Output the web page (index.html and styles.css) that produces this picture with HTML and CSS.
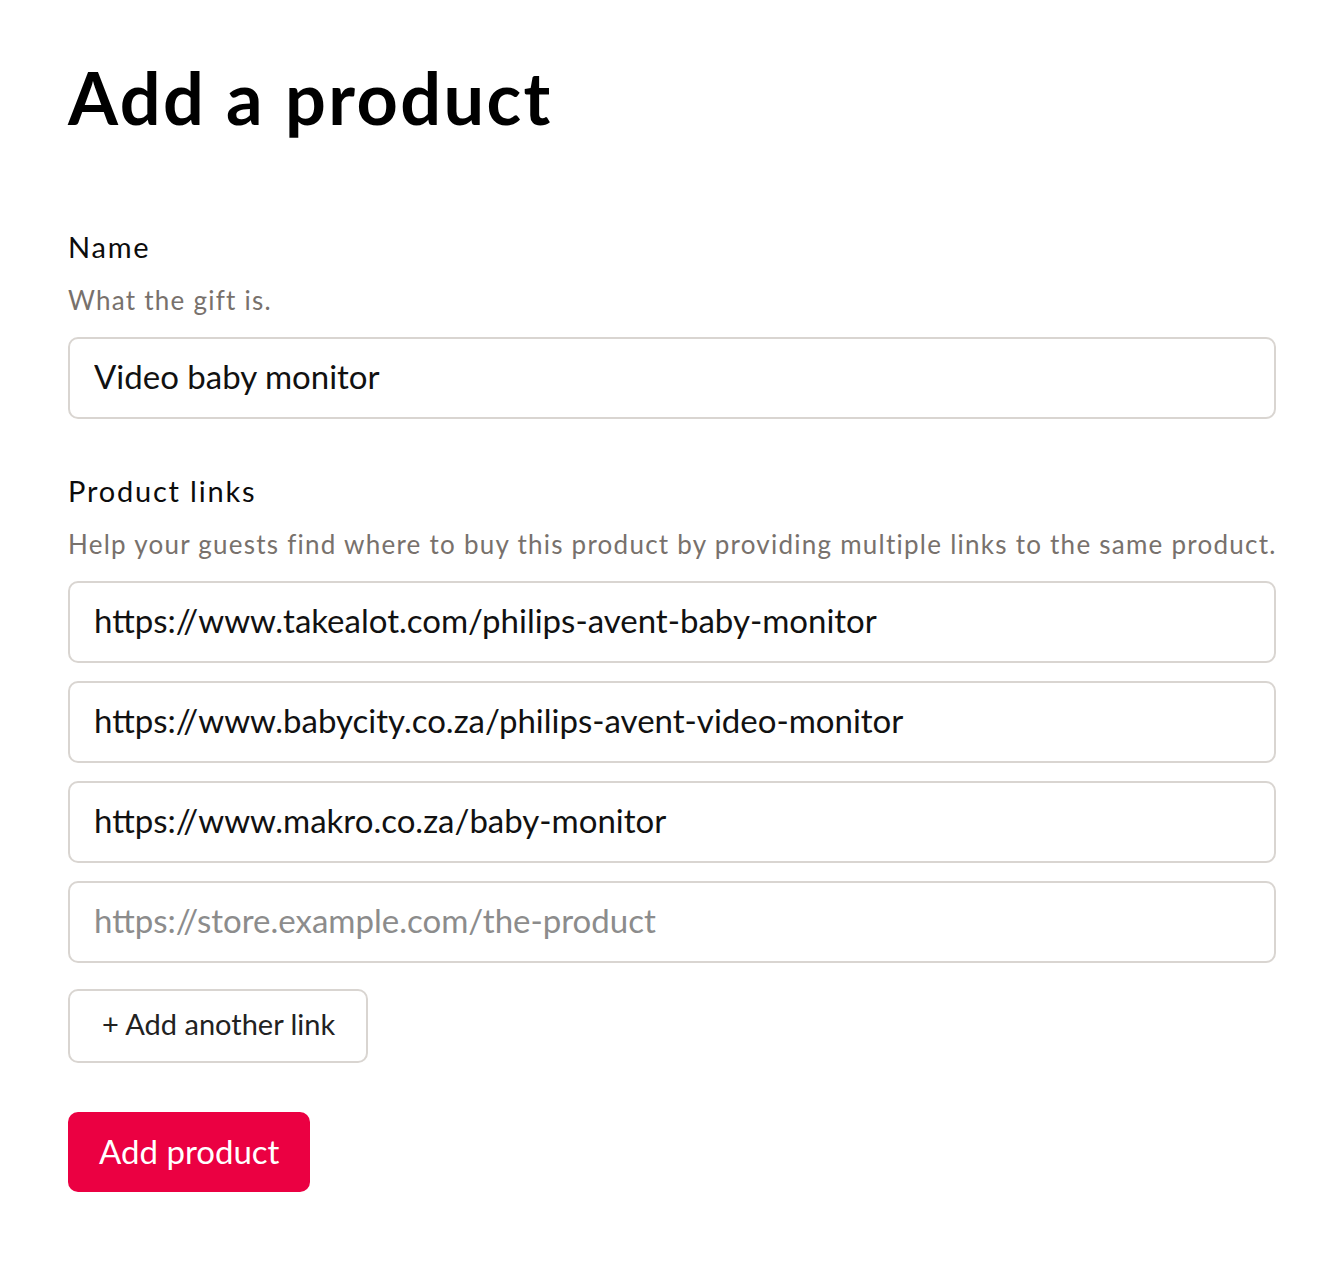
FILE: index.html
```html
<!DOCTYPE html>
<html lang="en">
<head>
<meta charset="utf-8">
<title>Add a product</title>
<link rel="stylesheet" href="styles.css">
</head>
<body>
<main class="page">
  <h1 class="title">Add a product</h1>
  <form class="form">
    <div class="field field-name">
      <label class="label" for="name">Name</label>
      <p class="hint">What the gift is.</p>
      <input class="input" id="name" type="text" value="Video baby monitor">
    </div>
    <div class="field field-links">
      <label class="label" for="link1">Product links</label>
      <p class="hint">Help your guests find where to buy this product by providing multiple links to the same product.</p>
      <div class="links">
        <input class="input" id="link1" type="url" value="https://www.takealot.com/philips-avent-baby-monitor">
        <input class="input" type="url" value="https://www.babycity.co.za/philips-avent-video-monitor">
        <input class="input" type="url" value="https://www.makro.co.za/baby-monitor">
        <input class="input" type="url" placeholder="https://store.example.com/the-product">
      </div>
      <button class="btn-secondary" type="button">+ Add another link</button>
    </div>
    <button class="btn-primary" type="submit">Add product</button>
  </form>
</main>
</body>
</html>
```
FILE: styles.css
```css
* { box-sizing: border-box; }
html, body { margin: 0; padding: 0; background: #ffffff; }
body {
  font-family: "Lato", "Noto Sans", "Liberation Sans", sans-serif;
  color: #111111;
}
.page {
  padding: 54px 68px 0;
}
.title {
  margin: 0 0 89px;
  font-size: 72px;
  line-height: 86px;
  font-weight: 700;
  letter-spacing: 2.4px;
  color: #000000;
}
.form { display: flex; flex-direction: column; align-items: flex-start; }
.field { display: flex; flex-direction: column; align-items: flex-start; width: 100%; }
.field-links { margin-top: 54px; }
.label {
  display: block;
  font-size: 29px;
  line-height: 36px;
  letter-spacing: 1.8px;
  color: #0c0c0c;
}
.hint {
  margin: 19px 0 0;
  font-size: 26px;
  line-height: 32px;
  letter-spacing: 1.25px;
  color: #78716c;
  white-space: nowrap;
}
.input {
  display: block;
  width: 100%;
  height: 82px;
  margin-top: 21px;
  padding: 0 24px 4px;
  border: 2px solid #d9d5d1;
  border-radius: 10px;
  font-family: inherit;
  font-size: 33px;
  color: #111111;
  background: #ffffff;
  outline: none;
}
.input::placeholder { color: #8c8c8c; opacity: 1; }
.links { display: flex; flex-direction: column; gap: 18px; width: 100%; margin-top: 21px; }
.links .input { margin-top: 0; }
.btn-secondary {
  margin-top: 26px;
  height: 74px;
  padding: 0 31px 5px 32px;
  border: 2px solid #d9d5d1;
  border-radius: 10px;
  background: #ffffff;
  font-family: inherit;
  font-size: 29px;
  color: #222222;
  cursor: pointer;
}
.btn-primary {
  margin-top: 49px;
  height: 80px;
  padding: 0 31px 2px;
  border: none;
  border-radius: 10px;
  background: #eb0042;
  color: #ffffff;
  font-family: inherit;
  font-size: 33px;
  cursor: pointer;
}
```
